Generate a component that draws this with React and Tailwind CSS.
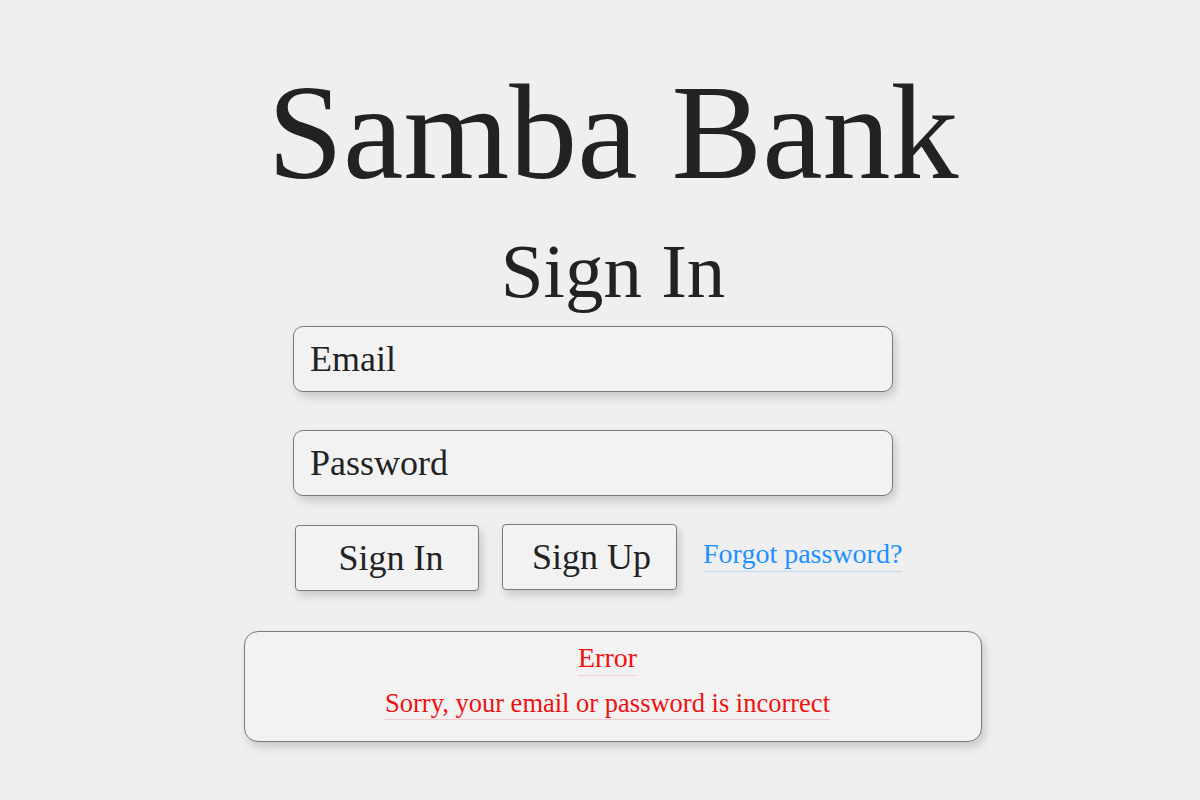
import React from 'react';

const serif = { fontFamily: '"Liberation Serif", "DejaVu Serif", serif' };

const Field = ({ label }) => (
    <div className='w-[600px] h-[66px] border border-[#7a7a7a] rounded-[10px] bg-[#f2f2f2] shadow-[3px_5px_8px_rgba(0,0,0,0.16)] flex items-center pl-[16px]'>
        <span className='text-[36px] text-[#222] leading-none'>{label}</span>
    </div>
);

const App = () => {
    return (
        <div className='min-h-[800px] w-full bg-[#efefef] flex flex-col items-center pl-[26px] text-[#222]' style={serif}>
            <h1 className='mt-[64px] text-[136px] leading-none'>Samba Bank</h1>
            <h2 className='mt-[33px] text-[77px] leading-none'>Sign In</h2>

            <div className='mt-[16px] mr-[40px] flex flex-col'>
                <div className='flex flex-col gap-[38px]'>
                    <Field label='Email' />
                    <Field label='Password' />
                </div>

                <div className='mt-[29px] w-[600px] flex items-start'>
                    <button className='shrink-0 ml-[2px] w-[184px] h-[66px] border border-[#7a7a7a] rounded-[4px] bg-[#f2f2f2] shadow-[3px_5px_8px_rgba(0,0,0,0.16)] text-[36px] leading-none pl-[8px]'>
                        Sign In
                    </button>
                    <button className='shrink-0 ml-[23px] -mt-[1px] w-[175px] h-[66px] border border-[#7a7a7a] rounded-[4px] bg-[#f2f2f2] shadow-[3px_5px_8px_rgba(0,0,0,0.16)] text-[36px] leading-none pl-[4px]'>
                        Sign Up
                    </button>
                    <a href='#' className='shrink-0 ml-[26px] mt-[12px] whitespace-nowrap text-[28px] leading-[1.2] text-[#1e8fff] border-b border-[#b9d9fb]'>
                        Forgot password?
                    </a>
                </div>
            </div>

            <div className='mt-[40px] w-[738px] h-[111px] border border-[#7a7a7a] rounded-[14px] bg-[#f2f2f2] shadow-[3px_5px_8px_rgba(0,0,0,0.16)] flex flex-col items-center pt-[9px] pr-[11px]'>
                <span className='text-[28px] leading-[1.2] text-[#ee1111] border-b border-[#f3c9c9]'>Error</span>
                <span className='mt-[12px] text-[26.5px] leading-[1.2] text-[#ee1111] border-b border-[#f3c9c9]'>
                    Sorry, your email or password is incorrect
                </span>
            </div>
        </div>
    );
};

export default App;
